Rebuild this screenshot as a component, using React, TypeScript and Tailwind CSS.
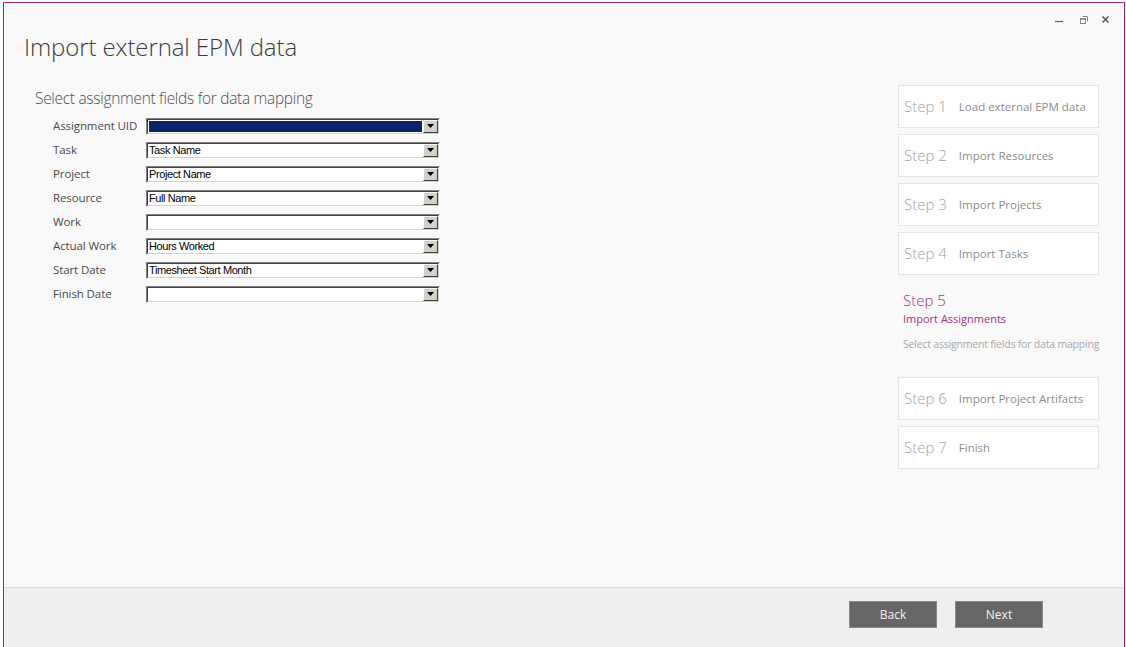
import React from "react";

const font = { fontFamily: '"Open Sans", "Noto Sans", sans-serif' } as const;

function Combo({ value, selected }: { value?: string; selected?: boolean }) {
  return (
    <div className="h-[17px] w-[294px] border border-t-[#808080] border-l-[#808080] border-b-white border-r-white">
      <div className="flex h-full w-full border border-t-[#404040] border-l-[#404040] border-b-[#d4d0c8] border-r-[#d4d0c8] bg-white">
        <div className="flex-1 min-w-0 flex items-center">
          {selected ? (
            <div className="h-full w-full bg-[#0a246a] border border-white" />
          ) : (
            <span
              className="pl-[1px] text-[11px] leading-none text-black tracking-[-0.4px]"
              style={{ fontFamily: '"Liberation Sans", Arial, sans-serif' }}
            >
              {value}
            </span>
          )}
        </div>
        <div className="h-full w-[15px] bg-[#d4d0c8] border border-t-white border-l-white border-b-[#404040] border-r-[#404040] flex items-center justify-center">
          <svg width="7" height="4" viewBox="0 0 7 4">
            <path d="M0 0h7L3.5 4z" fill="#000" />
          </svg>
        </div>
      </div>
    </div>
  );
}

const rows: { label: string; value?: string; selected?: boolean }[] = [
  { label: "Assignment UID", selected: true },
  { label: "Task", value: "Task Name" },
  { label: "Project", value: "Project Name" },
  { label: "Resource", value: "Full Name" },
  { label: "Work", value: "" },
  { label: "Actual Work", value: "Hours Worked" },
  { label: "Start Date", value: "Timesheet Start Month" },
  { label: "Finish Date", value: "" },
];

function StepBox({ n, label }: { n: number; label: string }) {
  return (
    <div className="h-[43px] bg-white border border-[#e4e4e4] flex items-center pl-[5px]">
      <span className="text-[15px] font-light text-[#a3a3a3] leading-none">Step {n}</span>
      <span className="ml-[12px] text-[11.5px] text-[#8c8c8c] leading-none">{label}</span>
    </div>
  );
}

export default function App() {
  return (
    <div className="w-[1126px] h-[647px] bg-white pl-[3px] pt-[2px] overflow-hidden" style={font}>
      <div className="relative w-[1122px] h-[650px] border-l border-t border-r border-[#a1237d] bg-[#f9f9f9] flex flex-col">
        {/* window controls */}
        <div className="absolute right-[14px] top-[12px] flex items-center text-[#666]">
          <svg width="9" height="9" viewBox="0 0 9 9">
            <path d="M0 6.5h8" stroke="#666" strokeWidth="1.2" />
          </svg>
          <svg width="8" height="8" viewBox="0 0 8 8" className="ml-[16px]">
            <rect x="0.5" y="2.5" width="5" height="5" fill="none" stroke="#888" />
            <path d="M2.5 0.5h5v5" fill="none" stroke="#888" />
            <path d="M0.5 3h5" stroke="#888" strokeWidth="1.5" />
          </svg>
          <svg width="9" height="9" viewBox="0 0 9 9" className="ml-[13px]">
            <path d="M1.5 1.5l6 6M7.5 1.5l-6 6" stroke="#555" strokeWidth="1.5" />
          </svg>
        </div>

        <div className="flex-1 flex flex-col">
          <div className="pl-[20px] pt-[29px] h-[82px]">
            <h1 className="text-[24px] leading-[30px] font-light text-[#3c3c3c] tracking-[-0.1px]">
              Import external EPM data
            </h1>
          </div>

          <div className="flex">
            {/* left form */}
            <div className="w-[894px] pl-[31px]">
              <div className="pt-[1px] text-[15.5px] leading-[24px] font-light text-[#505050] tracking-[-0.3px]">
                Select assignment fields for data mapping
              </div>
              <div className="mt-[4px] flex flex-col pl-[18px]">
                {rows.map((r) => (
                  <div key={r.label} className="h-[24px] flex items-center">
                    <div className="w-[93px] text-[11.5px] text-[#4a4a4a] tracking-[-0.1px]">{r.label}</div>
                    <Combo value={r.value} selected={r.selected} />
                  </div>
                ))}
              </div>
            </div>

            {/* steps */}
            <div className="w-[201px] flex flex-col gap-[6px]">
              <StepBox n={1} label="Load external EPM data" />
              <StepBox n={2} label="Import Resources" />
              <StepBox n={3} label="Import Projects" />
              <StepBox n={4} label="Import Tasks" />
              <div className="h-[90px] pl-[5px] pt-[10px] flex flex-col">
                <span className="text-[15px] font-light text-[#a4307f] leading-[18px]">Step 5</span>
                <span className="text-[11px] text-[#a4307f] leading-[14px] mt-[3px]">Import Assignments</span>
                <span className="text-[10.5px] text-[#a8a8a8] leading-[14px] mt-[11px] whitespace-nowrap tracking-[-0.2px]">
                  Select assignment fields for data mapping
                </span>
              </div>
              <StepBox n={6} label="Import Project Artifacts" />
              <StepBox n={7} label="Finish" />
            </div>
          </div>
        </div>

        {/* footer */}
        <div className="h-[65px] shrink-0 border-t border-[#dadada] bg-[#efefef] flex items-start justify-end pr-[81px] pt-[13px] gap-[18px]">
          <button className="w-[88px] h-[27px] bg-[#666] border border-[#8a8a8a] text-[#f2f2f2] text-[12px]">
            Back
          </button>
          <button className="w-[88px] h-[27px] bg-[#666] border border-[#8a8a8a] text-[#f2f2f2] text-[12px]">
            Next
          </button>
        </div>
      </div>
    </div>
  );
}
